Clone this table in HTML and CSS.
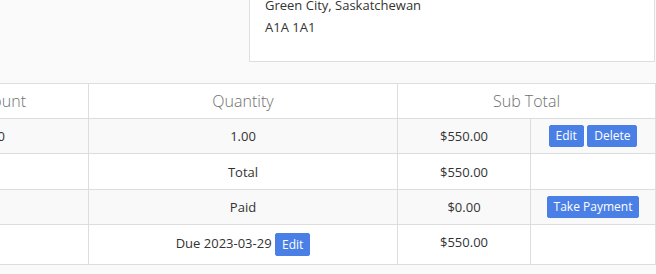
FILE: index.html
```html
<!DOCTYPE html>
<html lang="en">
<head>
<meta charset="utf-8">
<title>Invoice</title>
<link rel="stylesheet" href="styles.css">
</head>
<body>
<div class="page">
  <div class="top">
    <div class="card">
      <div class="line">Jane Customer</div>
      <div class="line">123 Main Street</div>
      <div class="line">Green City, Saskatchewan</div>
      <div class="line">A1A 1A1</div>
    </div>
  </div>
  <table class="items">
    <colgroup>
      <col class="c1"><col class="c2"><col class="c3"><col class="c4">
    </colgroup>
    <thead>
      <tr>
        <th class="first">Amount</th>
        <th>Quantity</th>
        <th colspan="2">Sub Total</th>
      </tr>
    </thead>
    <tbody>
      <tr class="striped">
        <td class="first">$550.00</td>
        <td>1.00</td>
        <td>$550.00</td>
        <td><a class="btn">Edit</a> <a class="btn">Delete</a> </td>
      </tr>
      <tr class="total">
        <td class="first"></td>
        <td>Total</td>
        <td>$550.00</td>
        <td></td>
      </tr>
      <tr class="striped">
        <td class="first"></td>
        <td>Paid</td>
        <td>$0.00</td>
        <td><a class="btn">Take Payment</a></td>
      </tr>
      <tr class="due">
        <td class="first"></td>
        <td>Due 2023-03-29 <a class="btn btn-due">Edit</a></td>
        <td>$550.00</td>
        <td></td>
      </tr>
    </tbody>
  </table>
</div>
</body>
</html>
```
FILE: styles.css
```css
html, body {
  margin: 0;
  padding: 0;
}
body {
  background: #fafafa;
  font-family: "Open Sans", "Liberation Sans", sans-serif;
  font-size: 13px;
  color: #333;
  overflow: hidden;
}
.page {
  width: 767px;
  margin: -67px 0 0 -112px;
}
.top {
  display: flex;
  justify-content: flex-end;
}
.card {
  width: 406px;
  box-sizing: border-box;
  background: #fff;
  border: 1px solid #dedede;
  padding: 16px 15px 23px 15px;
}
.line {
  line-height: 22px;
}
.items {
  margin-top: 21px;
  width: 767px;
  table-layout: fixed;
  border-collapse: collapse;
  background: #fff;
}
.c1 { width: 200px; }
.c2 { width: 309px; }
.c3 { width: 133px; }
.c4 { width: 125px; }
.items th,
.items td {
  border: 1px solid #dddddd;
  text-align: center;
  vertical-align: middle;
  padding: 0 8px;
}
.items th {
  height: 34px;
  font-size: 16px;
  font-weight: 300;
  color: #6f6f6f;
  line-height: 22px;
}
.items td {
  height: 34px;
  line-height: 18px;
}
.items th.first {
  text-align: right;
  padding-right: 62px;
}
.items td.first {
  text-align: right;
  padding-right: 83px;
}
.striped td {
  background: #f9f9f9;
}
.total td {
  height: 35px;
}
.due td {
  height: 31px;
  vertical-align: top;
  padding-top: 8px;
}
.btn {
  display: inline-block;
  vertical-align: middle;
  background: #4a7fe6;
  border: 1px solid #4a7fe6;
  border-radius: 2px;
  color: #fff;
  font-size: 12px;
  line-height: 18px;
  padding: 1px 6px;
}
.btn-due {
  line-height: 19px;
}
```
